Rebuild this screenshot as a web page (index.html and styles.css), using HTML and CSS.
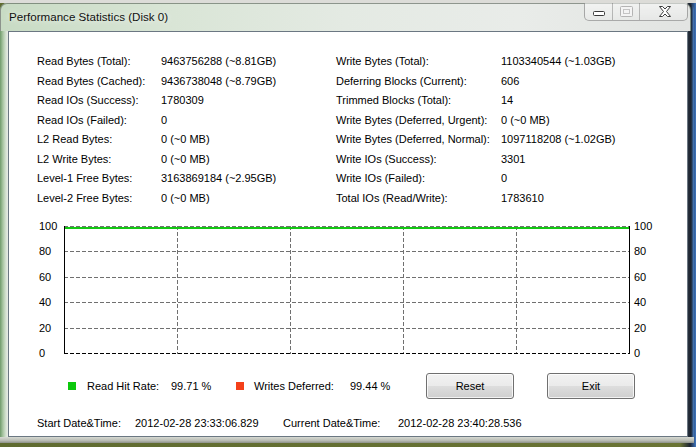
FILE: index.html
```html
<!DOCTYPE html>
<html>
<head>
<meta charset="utf-8">
<link rel="stylesheet" href="styles.css">
</head>
<body>
<div class="window">
  <div class="titlebar">
    <span class="title">Performance Statistics (Disk 0)</span>
    <div class="caption">
      <div class="cbtn min">
        <svg width="28" height="17" viewBox="0 0 28 17"><rect x="8.5" y="8.5" width="11" height="4" rx="1" fill="#fff" stroke="#3a3a3a"/></svg>
      </div>
      <div class="cbtn max">
        <svg width="27" height="17" viewBox="0 0 27 17"><rect x="7.5" y="3.5" width="12" height="10" rx="1" fill="#f4f4f4" stroke="#b4b4b4"/><rect x="10.5" y="6.5" width="6" height="4" fill="none" stroke="#c4c4c4"/></svg>
      </div>
      <div class="cbtn close">
        <svg width="47" height="17" viewBox="0 0 47 17"><path d="M19.5 3.5 H22.5 L25 6 L27.5 3.5 H30.5 L26.5 8.5 L30.5 13.5 H27.5 L25 11 L22.5 13.5 H19.5 L23.5 8.5 Z" fill="#fff" stroke="#3c3c3c" stroke-linejoin="round"/></svg>
      </div>
    </div>
  </div>
  <div class="mid">
    <div class="client">
      <div class="stats">
        <span>Read Bytes (Total):</span><span>9463756288 (~8.81GB)</span><span>Write Bytes (Total):</span><span>1103340544 (~1.03GB)</span>
        <span>Read Bytes (Cached):</span><span>9436738048 (~8.79GB)</span><span>Deferring Blocks (Current):</span><span>606</span>
        <span>Read IOs (Success):</span><span>1780309</span><span>Trimmed Blocks (Total):</span><span>14</span>
        <span>Read IOs (Failed):</span><span>0</span><span>Write Bytes (Deferred, Urgent):</span><span>0 (~0 MB)</span>
        <span>L2 Read Bytes:</span><span>0 (~0 MB)</span><span>Write Bytes (Deferred, Normal):</span><span>1097118208 (~1.02GB)</span>
        <span>L2 Write Bytes:</span><span>0 (~0 MB)</span><span>Write IOs (Success):</span><span>3301</span>
        <span>Level-1 Free Bytes:</span><span>3163869184 (~2.95GB)</span><span>Write IOs (Failed):</span><span>0</span>
        <span>Level-2 Free Bytes:</span><span>0 (~0 MB)</span><span>Total IOs (Read/Write):</span><span>1783610</span>
      </div>
      <div class="chart">
        <div class="yaxis"><span>100</span><span>80</span><span>60</span><span>40</span><span>20</span><span>0</span></div>
        <svg class="plot" width="566" height="128" viewBox="0 0 566 128">
          <g stroke="#707070" stroke-width="1" stroke-dasharray="4 2" fill="none">
            <line x1="0" y1="0.5" x2="566" y2="0.5"/>
            <line x1="0" y1="25.5" x2="566" y2="25.5"/>
            <line x1="0" y1="51.5" x2="566" y2="51.5"/>
            <line x1="0" y1="76.5" x2="566" y2="76.5"/>
            <line x1="0" y1="102.5" x2="566" y2="102.5"/>
            <line x1="113.5" y1="0" x2="113.5" y2="128"/>
            <line x1="226.5" y1="0" x2="226.5" y2="128"/>
            <line x1="339.5" y1="0" x2="339.5" y2="128"/>
            <line x1="452.5" y1="0" x2="452.5" y2="128"/>
          </g>
          <line x1="0" y1="127.5" x2="566" y2="127.5" stroke="#000" stroke-dasharray="4 2"/>
          <line x1="0.5" y1="0" x2="0.5" y2="128" stroke="#000"/>
          <line x1="565.5" y1="0" x2="565.5" y2="128" stroke="#000"/>
          <line x1="1" y1="2" x2="565" y2="2" stroke="#14c814" stroke-width="2"/>
        </svg>
        <div class="yaxis right"><span>100</span><span>80</span><span>60</span><span>40</span><span>20</span><span>0</span></div>
      </div>
      <div class="legend">
        <span class="swatch green"></span>
        <span class="lg-label w84">Read Hit Rate:</span>
        <span class="lg-value w65">99.71 %</span>
        <span class="swatch red"></span>
        <span class="lg-label w96">Writes Deferred:</span>
        <span class="lg-value w76">99.44 %</span>
        <button class="btn">Reset</button>
        <button class="btn exit">Exit</button>
      </div>
      <div class="times">
        <span class="w98">Start Date&amp;Time:</span>
        <span class="w148">2012-02-28 23:33:06.829</span>
        <span class="w115">Current Date&amp;Time:</span>
        <span>2012-02-28 23:40:28.536</span>
      </div>
    </div>
  </div>
  <div class="bottom-frame"></div>
</div>
</body>
</html>
```
FILE: styles.css
```css
* { box-sizing: border-box; }
html, body { margin: 0; padding: 0; }
body {
  width: 696px;
  height: 447px;
  overflow: hidden;
  background:
    linear-gradient(to bottom, #dcdcd8 0, #dcdcd8 3px, transparent 3px),
    linear-gradient(to right, #5f6b30 0, #6a7434 680px, #1c2432 690px, #3f76c0 696px);
  font-family: "Liberation Sans", Arial, sans-serif;
  font-size: 11px;
  color: #000;
}
.window {
  margin-top: 3px;
  width: 694px;
  height: 440px;
  display: flex;
  flex-direction: column;
  border-radius: 7px 7px 0 0;
  background: linear-gradient(to right, #6f9a6a 0, #a9c6a3 3px, #d6e2d3 6px, #e6ebe5 8px, #e6ebe5 686px, #28313e 688px, #1a212b 691px, #4a80c6 694px);
}
.titlebar {
  height: 28px;
  margin-right: 3px;
  display: flex;
  align-items: flex-start;
  border: 1px solid rgba(70, 80, 70, 0.55);
  border-bottom: 0;
  border-radius: 7px 7px 0 0;
  background: linear-gradient(to right, #c8dbc4 0, #d9e5d6 25%, #e4eae3 50%, #e9ece9 75%, #e2e4e2 100%);
}
.title {
  padding-left: 8px;
  line-height: 26px;
  font-size: 11.6px;
  color: #111;
  text-shadow: 0 0 6px rgba(255,255,255,0.9);
}
.caption {
  margin-left: auto;
  margin-right: 2px;
  margin-top: -1px;
  display: flex;
  height: 18px;
  border: 1px solid rgba(80, 80, 80, 0.45);
  border-top: 0;
  border-radius: 0 0 5px 5px;
  background: linear-gradient(rgba(255,255,255,0.5), rgba(235,235,235,0.4));
  overflow: hidden;
}
.cbtn { height: 17px; }
.cbtn svg { display: block; }
.cbtn.min { width: 28px; border-right: 1px solid rgba(80,80,80,0.35); }
.cbtn.max { width: 27px; border-right: 1px solid rgba(80,80,80,0.35); }
.cbtn.close { width: 47px; }
.mid { display: flex; height: 406px; }
.client {
  margin-left: 8px;
  width: 680px;
  height: 406px;
  background: #fff;
  border: 1px solid #6b7782;
}
.stats {
  display: grid;
  grid-template-columns: 124px 175px 165px 1fr;
  grid-auto-rows: 19.5px;
  line-height: 19.5px;
  padding-left: 28px;
  margin-top: 20.25px;
  white-space: nowrap;
}
.chart {
  display: flex;
  align-items: flex-start;
  height: 141px;
  margin-top: 10.75px;
  padding-left: 30px;
}
.yaxis {
  display: flex;
  flex-direction: column;
  justify-content: space-between;
  width: 25px;
  height: 141px;
  line-height: 14px;
}
.yaxis.right { margin-left: 4px; }
.plot { display: block; margin-top: 7px; }
.legend {
  display: flex;
  align-items: center;
  height: 26px;
  margin-top: 13px;
  padding-left: 59px;
  white-space: nowrap;
}
.swatch { width: 8px; height: 8px; flex: none; }
.swatch.green { background: #0cc80c; }
.swatch.red { background: #f4401a; }
.lg-label.w84 { margin-left: 11px; }
.lg-label.w96 { margin-left: 10px; }
.w84 { width: 84px; }
.w65 { width: 65px; }
.w96 { width: 96px; }
.w76 { width: 76px; }
.w98 { width: 98px; }
.w148 { width: 148px; }
.w115 { width: 115px; }
.btn {
  width: 88px;
  height: 26px;
  padding: 0;
  font-family: "Liberation Sans", Arial, sans-serif;
  font-size: 11px;
  color: #000;
  border: 1px solid #707070;
  border-radius: 3px;
  background: linear-gradient(#f2f2f2 0%, #ebebeb 48%, #dddddd 52%, #cfcfcf 100%);
  box-shadow: inset 0 0 0 1px rgba(255,255,255,0.75);
}
.btn.exit { margin-left: 33px; }
.times {
  display: flex;
  margin-top: 17px;
  line-height: 14px;
  padding-left: 28px;
  white-space: nowrap;
}
.bottom-frame {
  height: 6px;
  background: linear-gradient(#d6d9d2, #b9bcb4 60%, #8c9088);
}
```
